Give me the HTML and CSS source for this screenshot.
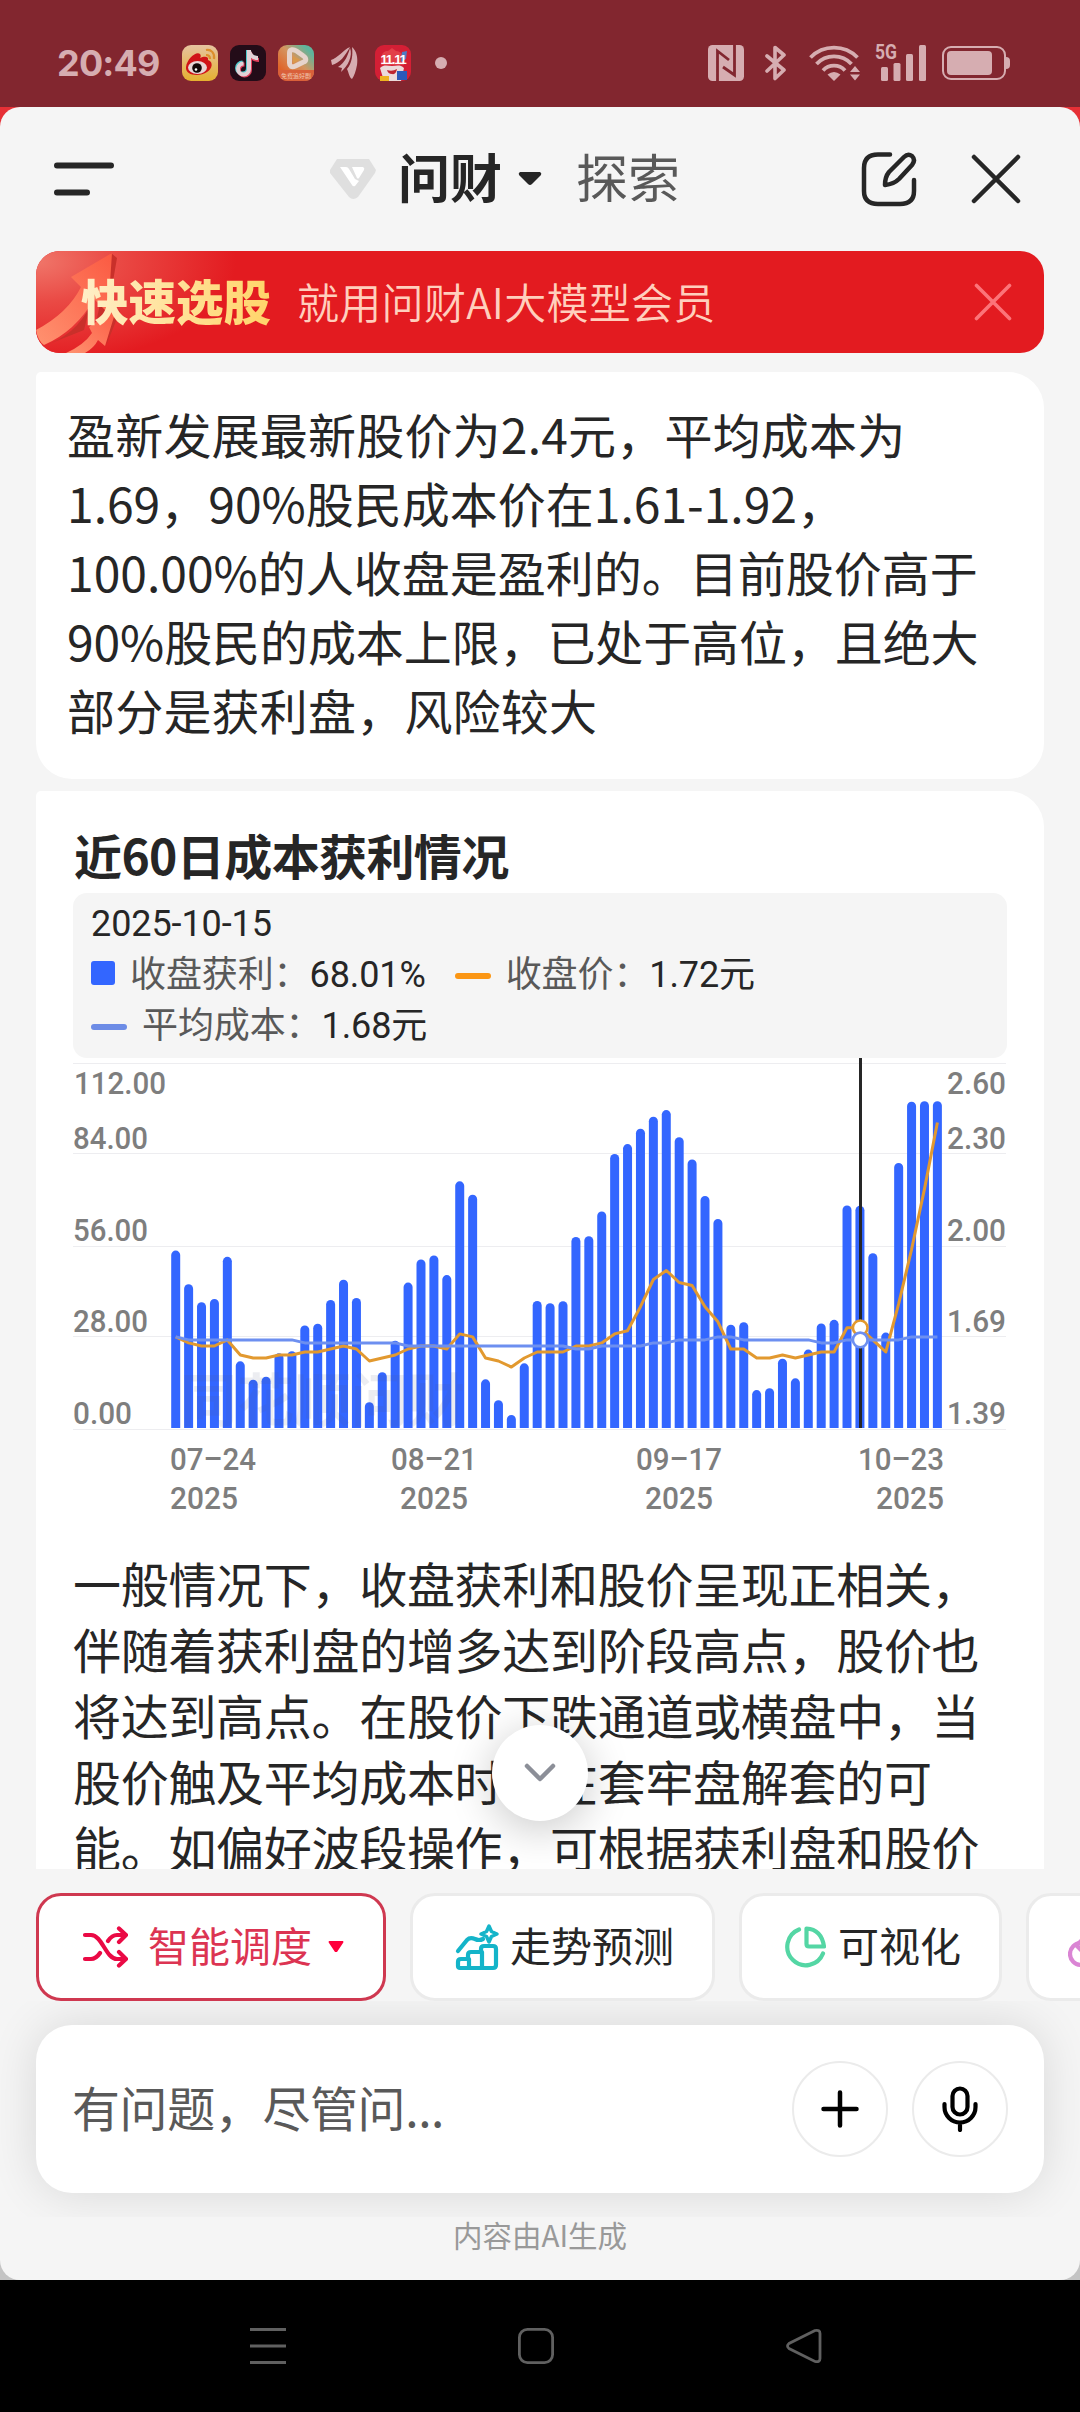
FILE: index.html
```html
<!DOCTYPE html>
<html lang="zh-CN">
<head>
    <meta charset="UTF-8">
    <meta name="viewport" content="width=device-width, initial-scale=1.0">
    <title>问财</title>
    <link rel="stylesheet" href="styles.css">
</head>
<body>
    <div class="status-bar">
        <span class="time">20:49</span>
        <div class="status-apps">
            <svg width="36" height="36" viewBox="0 0 36 36">
                <defs><linearGradient id="wb" x1="0" y1="0" x2="0" y2="1"><stop offset="0" stop-color="#e6c3a0"/><stop offset="1" stop-color="#e5b030"/></linearGradient></defs>
                <rect width="36" height="36" rx="9" fill="url(#wb)"/>
                <path d="M4 22C5 14 14 6 18 9c1 1 1 3 0 4 4-2 9-2 8 2 6 2 4 9-1 12-7 5-22 4-21-5z" fill="#d01418"/>
                <ellipse cx="15.500" cy="22.500" rx="9.500" ry="6.500" fill="#e8d6d6"/>
                <circle cx="15" cy="23" r="4.800" fill="#140808"/>
                <circle cx="14" cy="24.500" r="1.300" fill="#fff"/>
                <path d="M24 5c5-1 9 3 8 9M24 10c3 0 4 1 4 4" stroke="#dd8e2c" stroke-width="2.200" fill="none"/>
            </svg>
            <svg width="36" height="36" viewBox="0 0 36 36">
                <rect width="36" height="36" rx="9" fill="#230c18"/>
                <g fill="none" stroke-width="4">
                    <path d="M17 5v18a5.500 5.500 0 1 1-5.500-5.500M17 6c1 4 4 7 9 7" stroke="#4cc9cb" transform="translate(1 0)"/>
                    <path d="M19 6v18a5.500 5.500 0 1 1-5.500-5.500M19 7c1 4 4 7 9 7" stroke="#e0405c" transform="translate(1 1)"/>
                    <path d="M18 5v19a5.500 5.500 0 1 1-5.500-5.500M18 6c1 4 4 7 9 7" stroke="#e2d2d6" transform="translate(1 0)"/>
                </g>
            </svg>
            <svg width="36" height="36" viewBox="0 0 36 36">
                <defs><linearGradient id="ks" x1="0" y1="1" x2="1" y2="0"><stop offset=".2" stop-color="#e06428"/><stop offset=".55" stop-color="#d49560"/><stop offset=".85" stop-color="#5fb49c"/></linearGradient></defs>
                <rect width="36" height="36" rx="9" fill="url(#ks)"/>
                <path d="M0 25h36v2a9 9 0 0 1-9 9H9a9 9 0 0 1-9-9z" fill="#d9603a"/>
                <path d="M11.500 8c0-4 4-4 7-2l7 5c3 2 3 5 0 6l-8 4c-4 2-6 0-6-3z" fill="none" stroke="#e6d4cc" stroke-width="5"/>
                <path d="M15 11l7 3.500-7 4z" fill="#d99a4c"/>
                <text x="18" y="33" class="app-tag">免费追好剧</text>
            </svg>
            <svg class="leaf" width="27" height="32" viewBox="0 0 27 32">
                <path d="M0 13C7 11 12 3 19 0 14 9 9 16 1 18zM7 20C14 16 17 8 19 1c3 8-2 18-9 24l1-4zM21 0c5 4 6 12 5 18-1 6-3 11-5 14-3-2-3-6-5-10 5-6 6-14 5-22z" fill="#d6adb1"/>
            </svg>
            <svg width="36" height="36" viewBox="0 0 36 36">
                <rect width="36" height="36" rx="9" fill="#d41f35"/>
                <path d="M6 20c-1-12 3-14 7-14l4-3 4 3c5 0 9 5 8 14z" fill="#e23f48"/>
                <path d="M27 7l5-1-1 8-5 3z" fill="#4d7bc4"/>
                <path d="M5 23c4-4 8-2 12-2s8-2 12 2l-3 13H9z" fill="#ebdada"/>
                <path d="M12 25q5 2 10-1-1 6-5 5-4 0-5-4z" fill="#bd2530"/>
                <rect x="5" y="31" width="9" height="5" fill="#eeb320"/>
                <rect x="22" y="26" width="10" height="9" fill="#2c59b8"/>
                <text x="18" y="19" class="sale-tag">11.11</text>
            </svg>
            <i class="more-dot"></i>
        </div>
        <div class="status-icons">
            <svg width="36" height="36" viewBox="0 0 36 36">
                <rect width="36" height="36" rx="4.500" fill="#d6adb1"/>
                <path d="M9.500 36V6L21 15M26.500 0v30L15 22" fill="none" stroke="#82262f" stroke-width="2.800"/>
            </svg>
            <svg class="bt" width="22" height="36" viewBox="0 0 22 36">
                <path d="M2 11l17 14-9 8.500v-31L19 10 2 26" fill="none" stroke="#d6adb1" stroke-width="3.600" stroke-linejoin="round" stroke-linecap="round"/>
            </svg>
            <svg class="wifi" width="52" height="36" viewBox="0 0 52 36">
                <g fill="none" stroke="#d6adb1" stroke-width="3.800">
                    <path d="M1.500 12.500a33 33 0 0 1 47 0M7.500 19a24 24 0 0 1 35 0M14 25.500a15 15 0 0 1 22 0"/>
                </g>
                <path d="M18.500 29.500q6.500-5 13 0L25 36zM41 27l5-6 5 6zM41 29.500h10l-5 6z" fill="#d6adb1"/>
            </svg>
            <svg class="signal" width="54" height="42" viewBox="-2 -4 54 42">
                <text x="0" y="16" textLength="22" lengthAdjust="spacingAndGlyphs" class="net">5G</text>
                <g fill="#d6adb1"><rect x="6" y="24" width="7" height="14" rx="1.500"/><rect x="18.500" y="20" width="7" height="18" rx="1.500"/><rect x="31" y="11" width="7" height="27" rx="1.500"/><rect x="44" y="2" width="7" height="36" rx="1.500"/></g>
            </svg>
            <svg class="battery" width="68" height="36" viewBox="0 0 68 36">
                <rect x="1" y="2" width="62" height="32" rx="8" fill="none" stroke="#d6adb1" stroke-width="2"/>
                <rect x="5" y="6" width="45" height="24" rx="4" fill="#d6adb1"/>
                <path d="M64 12q4 0 4 4v4q0 4-4 4z" fill="#d6adb1"/>
            </svg>
        </div>
    </div>

    <div class="backdrop">
    <div class="sheet">
        <header class="header">
            <svg class="menu" width="60" height="34" viewBox="0 0 60 34" stroke="#262626" stroke-width="6" stroke-linecap="round">
                <path d="M3 3.500h54M3 30.500h30"/>
            </svg>
            <div class="tabs">
                <svg width="46" height="40" viewBox="0 0 46 40">
                    <path d="M7 0h32l7 11-1 3-17 24q-5 4-9 0L0 14v-3z" fill="#dfdfdf"/>
                    <path d="M10 8h6q2 0 3 2l6 10 4 2-4 5q-2 1-3-1zM22 8h11q2 1 1 3l-5 8q-1 1-2 0z" fill="#fff"/>
                </svg>
                <b class="tab-active">问财</b>
                <svg class="caret" width="24" height="14" viewBox="0 0 24 14"><path d="M2 0h20q2 1 1 3L14 12q-2 2-4 0L1 3q-1-2 1-3z" fill="#262626"/></svg>
                <span class="tab">探索</span>
            </div>
            <div class="header-actions">
                <svg width="56" height="56" viewBox="0 0 56 56" fill="none" stroke="#262626" stroke-width="4.500" stroke-linecap="round" stroke-linejoin="round">
                    <path d="M29 3.500H17Q3 3.500 3 17v23q0 13 14 13h22q14 0 14-13V29"/>
                    <path d="M43 6q4-4 8-1 4 4 0 9L38 28q-5 5-14 6 0-8 4-13z"/>
                </svg>
                <svg width="50" height="50" viewBox="0 0 50 50" stroke="#262626" stroke-width="4.500" stroke-linecap="round"><path d="M3 3l44 44M47 3L3 47"/></svg>
            </div>
        </header>

        <div class="banner">
            <svg class="banner-art" width="200" height="102" viewBox="0 0 200 102">
                <defs>
                    <radialGradient id="glow" cx="0" cy=".1" r="1"><stop offset="0" stop-color="#f0766a"/><stop offset=".4" stop-color="#ea4a45"/><stop offset="1" stop-color="#e31b20"/></radialGradient>
                    <linearGradient id="arrow" x1="0" y1="1" x2="1" y2="0"><stop offset="0" stop-color="#ff9270"/><stop offset="1" stop-color="#fb5a42"/></linearGradient>
                </defs>
                <rect width="200" height="102" fill="url(#glow)"/>
                <path d="M75 2l6 5-12 70-8-10zM8 95c22-8 36-20 46-40l-6 24zM70 95l14-35-6-4z" fill="#c9302a"/>
                <path d="M0 79Q32 62 45 36l-10-10L76 2 72 62 58 48Q40 80 8 94 2 90 0 79z" fill="url(#arrow)"/>
                <path d="M30 102q18-8 26-20l-3-6 28-20-12 39-7-6q-4 8-13 13z" fill="url(#arrow)"/>
            </svg>
            <b class="banner-title">快速选股</b>
            <span class="banner-text">就用问财AI大模型会员</span>
            <svg width="38" height="38" viewBox="0 0 38 38" stroke="#fc7479" stroke-width="3.600" stroke-linecap="round"><path d="M2.500 2.500l33 33M35.500 2.500l-33 33"/></svg>
        </div>

        <main class="messages">
            <section class="card summary">
                <p class="l1">盈新发展最新股价为2.4元，平均成本为</p>
                <p>1.69，90%股民成本价在1.61-1.92，</p>
                <p>100.00%的人收盘是盈利的。目前股价高于</p>
                <p class="l4">90%股民的成本上限，已处于高位，且绝大</p>
                <p class="l5">部分是获利盘，风险较大</p>
            </section>

            <section class="card detail">
                <h2>近60日成本获利情况</h2>
                <div class="legend">
                    <div class="legend-row">2025-10-15</div>
                    <div class="legend-row">
                        <i class="key-bar"></i><span>收盘获利：</span>68.01%
                        <i class="key-line price"></i><span>收盘价：</span>1.72元
                    </div>
                    <div class="legend-row">
                        <i class="key-line cost"></i><span>平均成本：</span>1.68元
                    </div>
                </div>
                <svg id="chart" class="chart" width="934" height="470" viewBox="73 1058 934 470"></svg>
                <div class="explain">
                    <p>一般情况下，收盘获利和股价呈现正相关，</p>
                    <p>伴随着获利盘的增多达到阶段高点，股价也</p>
                    <p>将达到高点。在股价下跌通道或横盘中，当</p>
                    <p>股价触及平均成本时存在套牢盘解套的可</p>
                    <p>能。如偏好波段操作，可根据获利盘和股价</p>
                </div>
            </section>
            <div class="scroll-down">
                <svg width="32" height="20" viewBox="0 0 32 20" fill="none" stroke="#8c8f98" stroke-width="4.500" stroke-linecap="round" stroke-linejoin="round"><path d="M3 3l13 13L29 3"/></svg>
            </div>
        </main>

        <div class="chips">
            <div class="chip active">
                <svg width="46" height="42" viewBox="0 0 46 42" fill="none" stroke="#ea0a45" stroke-width="4.200" stroke-linecap="round" stroke-linejoin="round">
                    <path d="M3 9h6c11 0 15 24 26 24h8M3 33h6q5 0 9-6M26 15q4-6 9-6h8M37 2.500L44 9l-7 7M37 26l7 7-7 6.500"/>
                </svg>
                <span>智能调度</span>
                <svg class="chip-caret" width="16" height="12" viewBox="0 0 16 12"><path d="M1 0h14q1 1 0 2L9 11H7L1 2Q0 1 1 0z" fill="#ff003c"/></svg>
            </div>
            <div class="chip trend">
                <svg width="46" height="48" viewBox="0 0 46 48" fill="none" stroke="#14b4c9" stroke-width="4.200" stroke-linejoin="round" stroke-linecap="round">
                    <path d="M4 28l9-11q3-3 8-1 4 2 8 0"/>
                    <path d="M35 3l2.500 5.500L43 11l-5.500 2.500L35 19l-2.500-5.500L27 11l5.500-2.500z" stroke-width="3.500"/>
                    <path d="M4 43v-4q0-3 3-3h7v-4q0-3 3-3h10v-3q0-3 3-3h9q3 0 3 3v16q0 3-3 3H6q-2 0-2-2M15 36v8M28 29v15"/>
                </svg>
                <span>走势预测</span>
            </div>
            <div class="chip pie">
                <svg width="42" height="42" viewBox="0 0 42 42" fill="none" stroke="#54d6a4" stroke-width="4.200" stroke-linecap="round" stroke-linejoin="round">
                    <path d="M15 3.500a18.500 18.500 0 1 0 24 24"/><path d="M22.500 2.500q15 1 17.500 18H25q-2.500 0-2.500-2.500z"/>
                </svg>
                <span>可视化</span>
            </div>
            <div class="chip last">
                <svg width="46" height="48" viewBox="0 0 46 48" fill="none" stroke="#da85d4" stroke-width="4.200"><circle cx="13" cy="31" r="11"/><path d="M8 23l9-9M8 22l8 8"/></svg>
            </div>
        </div>

        <div class="composer-wrap">
            <div class="composer">
                <span class="placeholder">有问题，尽管问...</span>
                <div class="round-btn"><svg width="38" height="38" viewBox="0 0 38 38" stroke="#000" stroke-width="4.500" stroke-linecap="round"><path d="M2.500 19h33M19 2.500v33"/></svg></div>
                <div class="round-btn"><svg width="36" height="46" viewBox="0 0 36 46" fill="none" stroke="#000" stroke-width="4.200" stroke-linecap="round"><rect x="10.500" y="2.500" width="15" height="26" rx="7.500"/><path d="M2.500 18v3a15.500 15.500 0 0 0 31 0v-3M18 37v7"/></svg></div>
            </div>
        </div>
        <footer class="footer">内容由AI生成</footer>
    </div>
    </div>

    <nav class="nav-bar">
        <svg width="36" height="36" viewBox="0 0 36 36" stroke="#606060" stroke-width="3"><path d="M0 1.500h36M0 18h36M0 34.500h36"/></svg>
        <svg width="36" height="36" viewBox="0 0 36 36" fill="none" stroke="#606060" stroke-width="2.800"><rect x="1.400" y="1.400" width="33.200" height="33.200" rx="8"/></svg>
        <svg width="36" height="36" viewBox="0 0 36 36" fill="none" stroke="#606060" stroke-width="2.800"><path d="M29 2.500L3 15.500q-3 2.500 0 5l26 13q5 1 5-3v-25q0-4-5-3z"/></svg>
    </nav>

    <script>
        const profit = [54.3, 44, 38.5, 39.5, 52.4, 20.4, 14.8, 15.7, 22.9, 23.5, 31.4, 31.9, 39.2, 45.4, 39.8,
            7.9, 17.1, 26.7, 44.5, 51.6, 52.8, 46.8, 75.5, 71.4, 14.9, 8.5, 4, 19.8, 38.9, 38.2,
            38.8, 58.5, 58.7, 66.3, 83.9, 86.9, 91.6, 95.3, 97.3, 89, 82.2, 71, 64, 31.6, 32.4,
            11.6, 12.2, 21.2, 15.2, 24, 32, 33.1, 68.1, 68, 53.5, 29.2, 81.1, 99.9, 100, 100];
        const price = [1.69, 1.67, 1.66, 1.66, 1.68, 1.63, 1.62, 1.62, 1.63, 1.63, 1.64, 1.64, 1.65, 1.66, 1.65,
            1.61, 1.62, 1.63, 1.65, 1.66, 1.66, 1.65, 1.7, 1.69, 1.62, 1.61, 1.59, 1.62, 1.64, 1.64,
            1.64, 1.66, 1.66, 1.67, 1.7, 1.71, 1.79, 1.88, 1.91, 1.87, 1.86, 1.79, 1.74, 1.65, 1.65,
            1.62, 1.62, 1.63, 1.62, 1.63, 1.64, 1.64, 1.72, 1.72, 1.68, 1.64, 1.8, 1.98, 2.18, 2.4];
        const cost = [1.69, 1.68, 1.68, 1.68, 1.68, 1.68, 1.68, 1.68, 1.68, 1.68, 1.67, 1.67, 1.67, 1.67, 1.67,
            1.67, 1.67, 1.67, 1.66, 1.66, 1.66, 1.66, 1.66, 1.66, 1.66, 1.66, 1.66, 1.66, 1.66, 1.66,
            1.66, 1.65, 1.65, 1.66, 1.66, 1.66, 1.66, 1.67, 1.67, 1.68, 1.68, 1.68, 1.69, 1.69, 1.68,
            1.68, 1.68, 1.68, 1.68, 1.68, 1.67, 1.67, 1.68, 1.68, 1.68, 1.68, 1.68, 1.69, 1.69, 1.69];

        const x = i => 175.7 + i * 12.91;
        const yPrice = v => 1429 - (v - 1.385) * 302;
        const points = data => data.map((v, i) => x(i).toFixed(1) + ',' + yPrice(v).toFixed(1)).join(' ');
        const label = (px, py, w, anchor, text) =>
            `<text x="${px}" y="${py}" textLength="${w}" lengthAdjust="spacingAndGlyphs" text-anchor="${anchor}" class="axis">${text}</text>`;

        let svg = '';
        [1063.5, 1153.5, 1246.5, 1336.5, 1429.5].forEach(y => {
            svg += `<path d="M73 ${y}H1006" class="grid"/>`;
        });

        // bars with a rounded cap and a flat foot
        profit.forEach((v, i) => {
            const top = 1428 - v * 3.267, left = x(i) - 4.5;
            svg += `<path d="M${left} 1428V${top + 4.5}a4.5 4.5 0 0 1 9 0V1428z" class="bar"/>`;
        });
        svg += '<text x="180" y="1421" class="watermark">同花顺问财</text>';

        // crosshair on the selected day
        svg += '<path d="M860.5 1058V1428" class="cross"/>';
        svg += `<polyline points="${points(price)}" class="line line-price"/>`;
        svg += `<polyline points="${points(cost)}" class="line line-cost"/>`;
        svg += `<circle cx="860.2" cy="${yPrice(1.72)}" r="7.3" class="dot line-price"/>`;
        svg += `<circle cx="860.2" cy="${yPrice(1.68)}" r="7.3" class="dot line-cost"/>`;

        svg += label(74, 1094, 92, 'start', '112.00');
        svg += label(73, 1149, 75, 'start', '84.00') + label(73, 1241, 75, 'start', '56.00');
        svg += label(73, 1332, 75, 'start', '28.00') + label(73, 1424, 59, 'start', '0.00');
        [[1094, '2.60'], [1149, '2.30'], [1241, '2.00'], [1332, '1.69'], [1424, '1.39']].forEach(([y, t]) => {
            svg += label(1006, y, 59, 'end', t);
        });
        [[170, 'start', '07–24'], [434, 'middle', '08–21'], [679, 'middle', '09–17'], [944, 'end', '10–23']].forEach(([px, a, t]) => {
            svg += label(px, 1470, 86, a, t) + label(px, 1509, 68, a, '2025');
        });
        document.getElementById('chart').innerHTML = svg;
    </script>
</body>
</html>
```
FILE: styles.css
```css
* { box-sizing: border-box; }
body { margin: 0; width: 1080px; height: 2412px; overflow: hidden; background: #000; color: #262626; font-family: "Noto Sans CJK SC", sans-serif; }
p, h2 { margin: 0; white-space: nowrap; }
svg { display: block; flex: none; }

.status-bar { display: flex; height: 107px; padding: 18px 70px 0 57px; align-items: center; background: #82262f; }
.time { width: 125px; font: 700 36px Inter, sans-serif; letter-spacing: -0.8px; color: #d6adb1; }
.status-apps { display: flex; align-items: center; gap: 12px; }
.leaf { margin: 0 5px; }
.app-tag { font-size: 6px; fill: #f0c8b0; text-anchor: middle; }
.sale-tag { font: bold 13px "Liberation Sans", sans-serif; letter-spacing: -1.2px; fill: #fff; text-anchor: middle; }
.more-dot { width: 12px; height: 12px; margin-left: 12px; border-radius: 50%; background: #d6adb1; }
.status-icons { display: flex; align-items: center; margin-left: auto; }
.bt { margin-left: 21px; }
.wifi { margin-left: 22px; }
.signal { margin: -6px 0 0 12px; }
.battery { margin-left: 15px; }
.net { font: bold 21px Roboto, sans-serif; fill: #d6adb1; }

.backdrop { height: 2173px; background: linear-gradient(#e63036 50%, #c4c4c4 50%); }
.sheet { display: flex; flex-direction: column; height: 2173px; border-radius: 20px; background: #f5f5f5; overflow: hidden; }
.header { display: flex; align-items: center; height: 144px; padding: 0 59px 0 54px; }
.tabs { display: flex; align-items: center; margin-left: 216px; font-size: 52px; line-height: 70px; }
.tab-active { margin: -7px 16px 0 22px; }
.tab { margin: -7px 0 0 34px; color: #595959; }
.header-actions { display: flex; align-items: center; gap: 54px; margin-left: auto; }

.banner { position: relative; display: flex; align-items: center; height: 102px; margin: 0 36px; padding: 0 32px 0 45px; border-radius: 24px; background: #e31b20; overflow: hidden; flex: none; }
.banner-art { position: absolute; left: 0; top: 0; }
.banner-title { position: relative; width: 216px; margin-top: -5px; font-size: 47.5px; font-weight: 900; background: linear-gradient(90deg, #ffefc8, #ffd469 190px); -webkit-background-clip: text; background-clip: text; color: transparent; }
.banner-text { flex: 1; margin-top: -4px; font-size: 42px; letter-spacing: 0.3px; color: #ffcfbd; font-weight: 350; }

.messages { position: relative; height: 1516px; padding: 19px 36px 0; overflow: hidden; flex: none; }
.card { background: #fff; border-radius: 5px 36px 36px 36px; }
.summary { height: 407px; padding: 27px 31px 0; font-size: 48px; line-height: 69px; }
.l1 { letter-spacing: 0.2px; }
.l4 { letter-spacing: -0.1px; }
.l5 { letter-spacing: 0.2px; }
.detail { height: 1200px; margin-top: 12px; padding: 28px 37px 0; }
.detail h2 { height: 74px; padding-left: 1px; font-size: 48px; line-height: 70px; letter-spacing: -0.6px; }
.legend { height: 165px; padding: 6px 18px; border-radius: 14px; background: #f5f5f5; }
.legend-row { display: flex; align-items: center; height: 51px; font: 36px/51px Roboto, "Noto Sans CJK SC", sans-serif; letter-spacing: -0.1px; }
.legend-row span { color: #595959; }
.key-bar { width: 24px; height: 24px; margin: -5px 15px 0 0; border-radius: 3px; background: #36f; }
.key-line { width: 36px; height: 6px; margin-right: 15px; border-radius: 3px; }
.key-line.price { margin-left: 29px; background: #fb9614; }
.key-line.cost { background: #6d8ce6; }

.grid { stroke: #ededf0; stroke-width: 1.2; }
.bar { fill: #36f; }
.cross { stroke: #262626; stroke-width: 3; }
.line { fill: none; stroke-width: 3; stroke-linejoin: round; }
.line-price { stroke: #e2992f; }
.line-cost { stroke: #6d8ff0; }
.dot { fill: #fff; stroke-width: 2.6; }
.axis { font: 500 31.5px Roboto, sans-serif; fill: #7e7e7e; }
.watermark { font-size: 57px; font-weight: bold; fill: #505a80; opacity: 0.1; }

.explain { padding: 21px 0 0; font-size: 48px; line-height: 66px; letter-spacing: -0.3px; }
.scroll-down { position: absolute; left: 492px; top: 1372px; width: 96px; height: 96px; display: flex; align-items: center; justify-content: center; border-radius: 50%; background: #fff; box-shadow: 0 8px 44px rgba(0, 0, 0, 0.22); }

.chips { display: flex; gap: 24px; height: 132px; padding: 24px 0 0 36px; overflow: hidden; flex: none; }
.chip { display: flex; align-items: center; height: 108px; padding-left: 41px; border: 3px solid #ebebeb; border-radius: 25px; background: #fff; font-size: 41px; white-space: nowrap; flex: none; }
.chip span { margin: -7px 0 0 10px; }
.chip.active { width: 350px; border-color: #cf3850; color: #dc3452; padding-left: 43px; }
.chip.active span { margin-left: 20px; }
.chip-caret { margin: 0 0 0 16px; }
.chip.trend { width: 305px; }
.chip.pie { width: 263px; padding-left: 42px; }
.chip.pie span { margin-left: 12px; }
.chip.last { width: 263px; padding-left: 39px; }

.composer-wrap { height: 216px; padding: 24px 36px; overflow: hidden; flex: none; }
.composer { display: flex; align-items: center; gap: 24px; height: 168px; padding: 0 36px; border-radius: 36px; background: #fff; box-shadow: 0 0 48px rgba(0, 0, 0, 0.12); }
.placeholder { flex: 1; margin-top: -7px; font-size: 48px; letter-spacing: -0.4px; color: #595959; }
.round-btn { display: flex; align-items: center; justify-content: center; width: 96px; height: 96px; border: 2.5px solid #ebebeb; border-radius: 50%; }
.footer { font-size: 29.5px; line-height: 34px; text-align: center; color: #999; }

.nav-bar { display: flex; gap: 232px; height: 132px; padding-left: 250px; align-items: center; background: #000; }
```
